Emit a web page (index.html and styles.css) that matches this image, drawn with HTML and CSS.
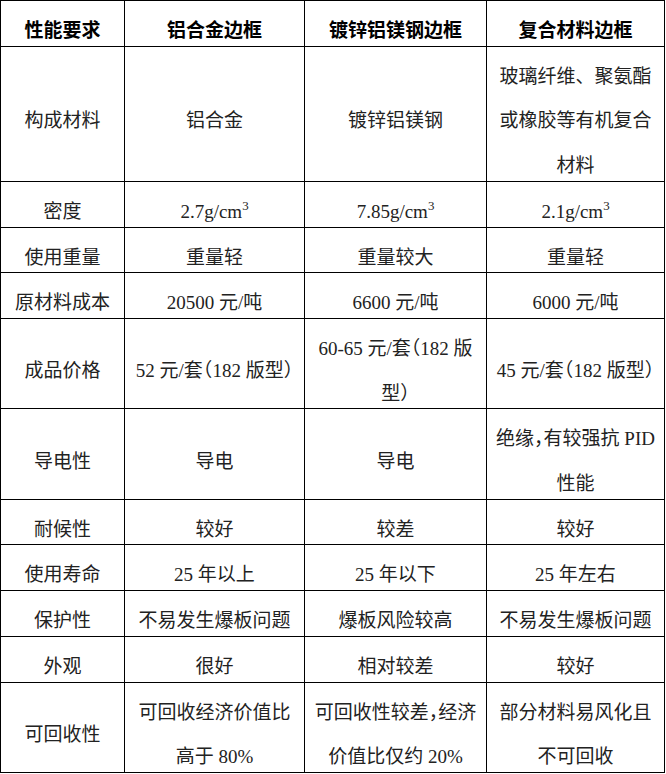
FILE: index.html
```html
<!DOCTYPE html>
<html lang="zh-CN">
<head>
<meta charset="utf-8">
<title>边框性能对比</title>
<link rel="stylesheet" href="styles.css">
</head>
<body>
<table class="spec">
  <colgroup>
    <col class="c1"><col class="c2"><col class="c3"><col class="c4">
  </colgroup>
  <thead>
    <tr class="r1">
      <th><span class="t">性能要求</span></th>
      <th><span class="t">铝合金边框</span></th>
      <th><span class="t">镀锌铝镁钢边框</span></th>
      <th><span class="t">复合材料边框</span></th>
    </tr>
  </thead>
  <tbody>
    <tr>
      <td><span class="t">构成材料</span></td>
      <td><span class="t">铝合金</span></td>
      <td><span class="t">镀锌铝镁钢</span></td>
      <td><span class="t">玻璃纤维、聚氨酯<br>或橡胶等有机复合<br>材料</span></td>
    </tr>
    <tr>
      <td><span class="t">密度</span></td>
      <td><span class="t">2.7g/cm<sup>3</sup></span></td>
      <td><span class="t">7.85g/cm<sup>3</sup></span></td>
      <td><span class="t">2.1g/cm<sup>3</sup></span></td>
    </tr>
    <tr>
      <td><span class="t">使用重量</span></td>
      <td><span class="t">重量轻</span></td>
      <td><span class="t">重量较大</span></td>
      <td><span class="t">重量轻</span></td>
    </tr>
    <tr>
      <td><span class="t">原材料成本</span></td>
      <td><span class="t">20500 元/吨</span></td>
      <td><span class="t">6600 元/吨</span></td>
      <td><span class="t">6000 元/吨</span></td>
    </tr>
    <tr>
      <td><span class="t">成品价格</span></td>
      <td><span class="t">52 元/套<span class="h">（</span>182 版型<span class="h">）</span></span></td>
      <td><span class="t">60-65 元/套<span class="h">（</span>182 版<br>型<span class="h">）</span></span></td>
      <td><span class="t">45 元/套<span class="h">（</span>182 版型<span class="h">）</span></span></td>
    </tr>
    <tr>
      <td><span class="t">导电性</span></td>
      <td><span class="t">导电</span></td>
      <td><span class="t">导电</span></td>
      <td><span class="t">绝缘<span class="h">，</span>有较强抗 PID<br>性能</span></td>
    </tr>
    <tr>
      <td><span class="t">耐候性</span></td>
      <td><span class="t">较好</span></td>
      <td><span class="t">较差</span></td>
      <td><span class="t">较好</span></td>
    </tr>
    <tr>
      <td><span class="t">使用寿命</span></td>
      <td><span class="t">25 年以上</span></td>
      <td><span class="t">25 年以下</span></td>
      <td><span class="t">25 年左右</span></td>
    </tr>
    <tr>
      <td><span class="t">保护性</span></td>
      <td><span class="t">不易发生爆板问题</span></td>
      <td><span class="t">爆板风险较高</span></td>
      <td><span class="t">不易发生爆板问题</span></td>
    </tr>
    <tr>
      <td><span class="t">外观</span></td>
      <td><span class="t">很好</span></td>
      <td><span class="t">相对较差</span></td>
      <td><span class="t">较好</span></td>
    </tr>
    <tr>
      <td><span class="t">可回收性</span></td>
      <td><span class="t">可回收经济价值比<br>高于 80%</span></td>
      <td><span class="t">可回收性较差<span class="h">，</span>经济<br>价值比仅约 20%</span></td>
      <td><span class="t">部分材料易风化且<br>不可回收</span></td>
    </tr>
  </tbody>
</table>
</body>
</html>
```

FILE: styles.css
```css
html, body {
  margin: 0;
  padding: 0;
  background: #ffffff;
}

.spec {
  border-collapse: collapse;
  table-layout: fixed;
  width: 664px;
  font-family: "Liberation Serif", "Noto Sans CJK SC", serif;
  font-size: 19px;
  line-height: 44.7px;
  color: #222222;
}

.spec .c1 { width: 124px; }
.spec .c2 { width: 180px; }
.spec .c3 { width: 182px; }
.spec .c4 { width: 178px; }

.spec th,
.spec td {
  border: 1px solid #000000;
  padding: 0;
  text-align: center;
  vertical-align: middle;
  white-space: nowrap;
}

.spec th {
  font-weight: 700;
  color: #000000;
}

.t {
  line-height: 0;
  vertical-align: -8px;
}

.h {
  font-feature-settings: "halt";
}

sup {
  font-size: 0.68em;
  line-height: 0;
  vertical-align: 0.62em;
}
```
